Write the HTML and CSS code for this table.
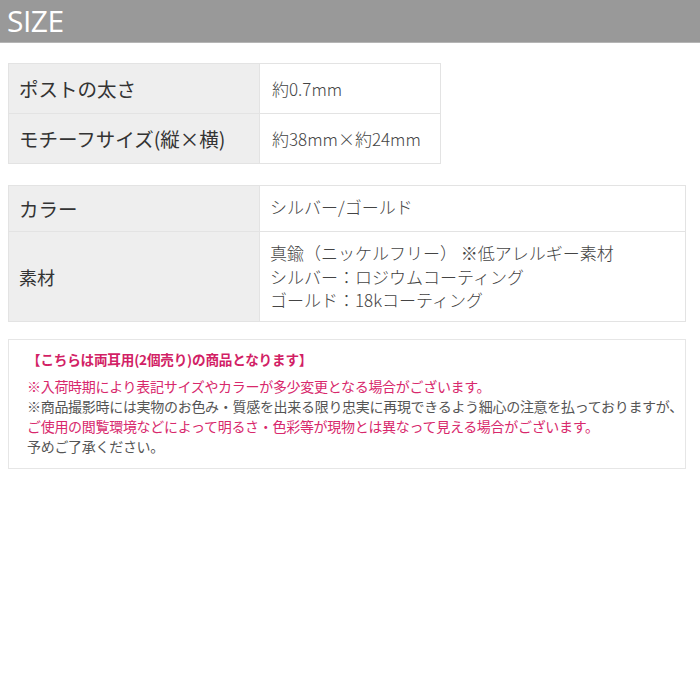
FILE: index.html
```html
<!DOCTYPE html>
<html lang="ja">
<head>
<meta charset="utf-8">
<link rel="stylesheet" href="styles.css">
</head>
<body>
<header class="title-bar"><h1 class="title">SIZE</h1></header>
<main class="content">
  <table class="spec spec-size">
    <tr><th>ポストの太さ</th><td>約0.7mm</td></tr>
    <tr><th>モチーフサイズ(縦×横)</th><td>約38mm×約24mm</td></tr>
  </table>
  <table class="spec spec-material">
    <tr class="row-color"><th>カラー</th><td>シルバー/ゴールド</td></tr>
    <tr class="row-material"><th class="small">素材</th><td>真鍮（ニッケルフリー） ※低アレルギー素材<br>シルバー：ロジウムコーティング<br>ゴールド：18kコーティング</td></tr>
  </table>
  <section class="notes">
    <p class="note-head">【こちらは両耳用(2個売り)の商品となります】</p>
    <p class="note-line pink">※入荷時期により表記サイズやカラーが多少変更となる場合がございます。</p>
    <p class="note-line">※商品撮影時には実物のお色み・質感を出来る限り忠実に再現できるよう細心の注意を払っておりますが、</p>
    <p class="note-line pink">ご使用の閲覧環境などによって明るさ・色彩等が現物とは異なって見える場合がございます。</p>
    <p class="note-line">予めご了承ください。</p>
  </section>
</main>
</body>
</html>
```
FILE: styles.css
```css
* { box-sizing: border-box; }
body {
  margin: 0;
  background: #fff;
  font-family: "Noto Sans CJK JP", "Noto Sans", sans-serif;
  color: #333;
}
.title-bar {
  background: #999;
  height: 43px;
  border-bottom: 1px solid #b5b5b5;
  padding-left: 7px;
  display: flex;
  align-items: center;
}
.title {
  margin: 0;
  font-family: "Open Sans", "Noto Sans", sans-serif;
  font-weight: 400;
  font-size: 30px;
  line-height: 1;
  color: #fff;
  letter-spacing: -0.5px;
}
.content {
  padding: 0 14px 0 8px;
}
.spec {
  border-collapse: collapse;
  border: 1px solid #e3e3e3;
}
.spec th, .spec td {
  border: 1px solid #e3e3e3;
  text-align: left;
  vertical-align: middle;
}
.spec th {
  background: #eeeeee;
  font-weight: 400;
  font-size: 19.5px;
  color: #333;
  width: 251px;
  padding: 0 0 0 10px;
}
.spec th.small { font-size: 18px; }
.spec td {
  background: #fff;
  color: #444;
  font-weight: 300;
  padding: 0 0 0 12px;
}
.spec-size {
  margin-top: 20px;
  width: 433px;
}
.spec-size tr { height: 50px; }
.spec-size td { font-size: 17px; }
.spec-material {
  margin-top: 21px;
  width: 678px;
}
.spec-material td { font-size: 17px; line-height: 23.5px; padding-left: 10px; }
.row-color { height: 46px; }
.row-color td { padding-bottom: 4px; }
.row-material { height: 90px; }
.notes {
  margin-top: 17px;
  width: 678px;
  height: 130px;
  border: 1px solid #e6e6e6;
  padding: 9px 6px 0 18px;
}
.notes p { margin: 0; }
.note-head {
  color: #d21f66;
  font-weight: 700;
  font-size: 13.6px;
  line-height: 20px;
  letter-spacing: -0.2px;
  margin-bottom: 7px !important;
}
.note-line {
  font-size: 14px;
  line-height: 20px;
  color: #555;
  white-space: nowrap;
  letter-spacing: -0.3px;
}
.note-line.pink { color: #d8286c; }
```
